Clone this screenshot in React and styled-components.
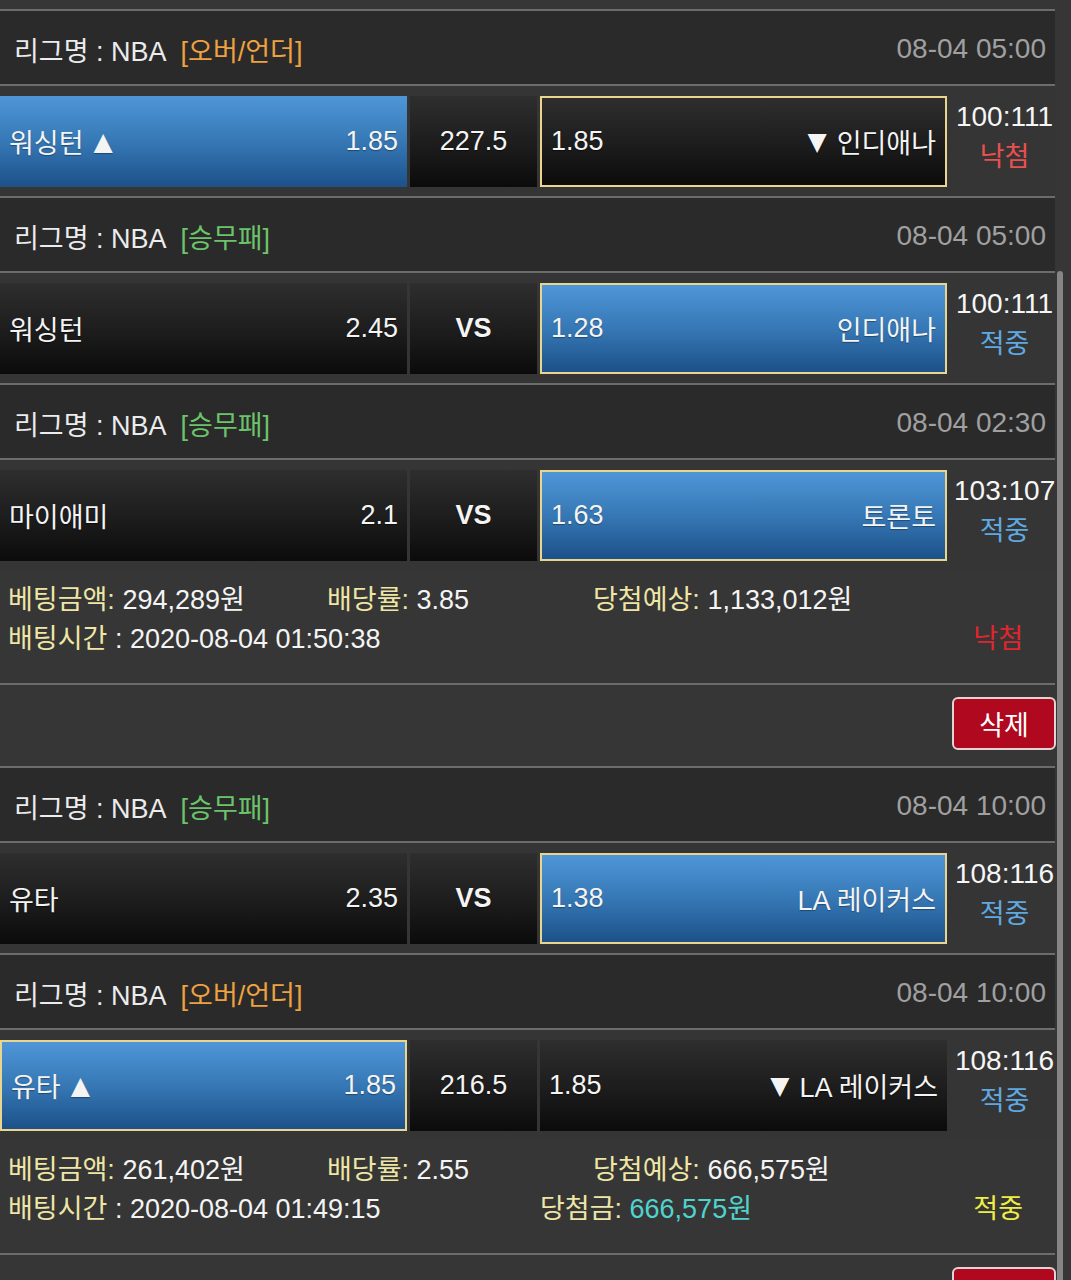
import React from 'react';
import styled, { createGlobalStyle, css } from 'styled-components';

const GlobalStyle = createGlobalStyle`
  html, body {
    margin: 0;
    padding: 0;
    overflow: hidden;
    background-color: #363636;
  }
  * {
    box-sizing: border-box;
  }
  body {
    font-family: "Liberation Sans", "Noto Sans CJK KR", sans-serif;
    color: #f2f2f2;
  }
`;

const Page = styled.main`
  display: flex;
  width: 1071px;
  min-height: 1280px;
  background-color: #363636;
`;

const List = styled.div`
  width: 1055px;
  padding-top: 9px;
`;

const Rail = styled.div`
  width: 16px;
  display: flex;
  flex-direction: column;
  padding-top: 271px;
  padding-left: 2px;
`;

const Thumb = styled.div`
  flex: 1;
  width: 6px;
  border-radius: 3px 3px 0 0;
  background-color: #858585;
`;

const Header = styled.div`
  height: 75px;
  display: flex;
  align-items: center;
  justify-content: space-between;
  padding: 3px 9px 0 14px;
  border-top: 2px solid #6c6c6c;
  background-color: #2a2a2a;
  font-size: 27px;
  p {
    margin: 0;
    color: #ececec;
  }
  time {
    font-size: 28px;
    color: #a0a0a0;
  }
`;

const Tag = styled.span`
  margin-left: 14px;
  color: ${p => (p.$kind === 'ou' ? '#eea13f' : '#6cc46a')};
`;

const Row = styled.div`
  display: grid;
  grid-template-columns: 407px 127px 407px 1fr;
  column-gap: 3px;
  height: 112px;
  padding: 10px 0 9px;
  border-top: 2px solid #6c6c6c;
  background-color: #353535;
`;

const Cell = styled.div`
  display: flex;
  align-items: center;
  justify-content: ${p => (p.$center ? 'center' : 'space-between')};
  padding: 0 9px;
  font-size: 27px;
  color: #f4f4f4;
  text-shadow: 0 1px 1px rgba(0, 0, 0, 0.55);
  background: linear-gradient(to bottom, #2e2e2e 0%, #1c1c1c 55%, #0b0b0b 100%);
  ${p => p.$win && css`
    background: linear-gradient(to bottom, #4f96d8 0%, #3678b5 50%, #1c5189 100%);
    text-shadow: 0 1px 1px rgba(0, 0, 0, 0.35);
  `}
  ${p => p.$pick && css`
    border: 2px solid #e9d58e;
  `}
  b {
    font-weight: bold;
  }
`;

const Arrow = styled.span`
  display: inline-block;
  font-family: "DejaVu Sans", sans-serif;
  font-size: 25px;
  vertical-align: 3px;
  margin: ${p => (p.$left ? '0 10px 0 0' : '0 0 0 10px')};
`;

const ScoreCol = styled.div`
  display: flex;
  flex-direction: column;
  align-items: center;
  padding: 2px 0 0 4px;
  strong {
    font-weight: normal;
    font-size: 28px;
    line-height: 38px;
    color: #f6f6f6;
    white-space: nowrap;
  }
`;

const Result = styled.span`
  font-size: 27px;
  line-height: 42px;
  color: ${p => (p.$hit ? '#5ea9e2' : '#e9504f')};
`;

const Info = styled.div`
  padding: 11px 0 24px 8px;
  font-size: 27px;
  line-height: 39px;
`;

const InfoLine = styled.div`
  display: flex;
  align-items: center;
`;

const Field = styled.div`
  width: ${p => (p.$w ? `${p.$w}px` : 'auto')};
  white-space: nowrap;
  color: #f4f4f4;
  label {
    color: #efe6a6;
  }
  em {
    font-style: normal;
    color: #4fd3cf;
  }
`;

const Status = styled.span`
  margin-left: auto;
  margin-right: 32px;
  color: ${p => (p.$hit ? '#efee45' : '#e0262c')};
`;

const ButtonBar = styled.div`
  height: 83px;
  display: flex;
  justify-content: flex-end;
  align-items: flex-start;
  padding-top: 12px;
  border-top: 2px solid #6c6c6c;
  button {
    width: 104px;
    height: 53px;
    margin-right: -1px;
    border: 2px solid #e5d2d2;
    border-radius: 6px;
    background-color: #b0081e;
    color: #fff;
    font-family: "Noto Sans CJK KR", sans-serif;
    font-size: 27px;
    line-height: 1;
    cursor: pointer;
  }
`;

const slips = [
  {
    games: [
      { kind: 'ou', date: '08-04 05:00', home: '워싱턴', homeOdds: '1.85', mid: '227.5', away: '인디애나', awayOdds: '1.85', win: 'home', pick: 'away', score: '100:111', hit: false },
      { kind: 'wdl', date: '08-04 05:00', home: '워싱턴', homeOdds: '2.45', away: '인디애나', awayOdds: '1.28', win: 'away', pick: 'away', score: '100:111', hit: true },
      { kind: 'wdl', date: '08-04 02:30', home: '마이애미', homeOdds: '2.1', away: '토론토', awayOdds: '1.63', win: 'away', pick: 'away', score: '103:107', hit: true },
    ],
    amount: '294,289원', rate: '3.85', expected: '1,133,012원', time: '2020-08-04 01:50:38', hit: false,
  },
  {
    games: [
      { kind: 'wdl', date: '08-04 10:00', home: '유타', homeOdds: '2.35', away: 'LA 레이커스', awayOdds: '1.38', win: 'away', pick: 'away', score: '108:116', hit: true },
      { kind: 'ou', date: '08-04 10:00', home: '유타', homeOdds: '1.85', mid: '216.5', away: 'LA 레이커스', awayOdds: '1.85', win: 'home', pick: 'home', score: '108:116', hit: true },
    ],
    amount: '261,402원', rate: '2.55', expected: '666,575원', time: '2020-08-04 01:49:15', prize: '666,575원', hit: true,
  },
];

function Game({ g }) {
  const ou = g.kind === 'ou';
  return (
    <>
      <Header>
        <p>리그명 : NBA<Tag $kind={g.kind}>{ou ? '[오버/언더]' : '[승무패]'}</Tag></p>
        <time>{g.date}</time>
      </Header>
      <Row>
        <Cell $win={g.win === 'home'} $pick={g.pick === 'home'}>
          <span>{g.home}{ou && <Arrow>▲</Arrow>}</span>
          <span>{g.homeOdds}</span>
        </Cell>
        <Cell $center>{ou ? g.mid : <b>VS</b>}</Cell>
        <Cell $win={g.win === 'away'} $pick={g.pick === 'away'}>
          <span>{g.awayOdds}</span>
          <span>{ou && <Arrow $left>▼</Arrow>}{g.away}</span>
        </Cell>
        <ScoreCol>
          <strong>{g.score}</strong>
          <Result $hit={g.hit}>{g.hit ? '적중' : '낙첨'}</Result>
        </ScoreCol>
      </Row>
    </>
  );
}

function Slip({ s }) {
  return (
    <section>
      {s.games.map((g, i) => <Game key={i} g={g} />)}
      <Info>
        <InfoLine>
          <Field $w={319}><label>베팅금액:</label> {s.amount}</Field>
          <Field $w={266}><label>배당률:</label> {s.rate}</Field>
          <Field><label>당첨예상:</label> {s.expected}</Field>
        </InfoLine>
        <InfoLine>
          <Field $w={532}><label>배팅시간</label> : {s.time}</Field>
          {s.prize && <Field><label>당첨금:</label> <em>{s.prize}</em></Field>}
          <Status $hit={s.hit}>{s.hit ? '적중' : '낙첨'}</Status>
        </InfoLine>
      </Info>
      <ButtonBar>
        <button type="button">삭제</button>
      </ButtonBar>
    </section>
  );
}

export default function App() {
  return (
    <Page>
      <GlobalStyle />
      <List>
        {slips.map((s, i) => <Slip key={i} s={s} />)}
      </List>
      <Rail>
        <Thumb />
      </Rail>
    </Page>
  );
}
